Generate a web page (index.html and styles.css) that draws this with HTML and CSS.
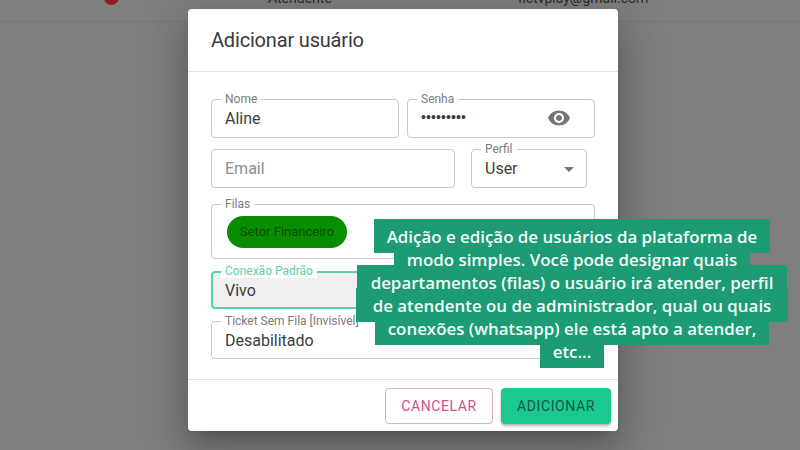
FILE: index.html
```html
<!DOCTYPE html>
<html>
<head>
    <title>Adicionar usuário</title>
    <link rel="stylesheet" href="styles.css">
</head>
<body>

    <div class="behind-row">
        <span class="status-dot"></span>
        <span class="behind-profile">Atendente</span>
        <span class="behind-email">fictvplay@gmail.com</span>
    </div>

    <div class="dialog">
        <h2 class="dialog-title">Adicionar usuário</h2>

        <div class="dialog-body">
            <div class="form-row">
                <div class="field grow">
                    <span class="field-label">Nome</span>
                    <span class="field-value">Aline</span>
                </div>
                <div class="field grow password">
                    <span class="field-label">Senha</span>
                    <span class="field-value dots">•••••••••</span>
                    <svg class="eye" viewBox="0 0 24 24" width="24" height="24"><path d="M12 4.5C7 4.5 2.73 7.61 1 12c1.73 4.39 6 7.5 11 7.5s9.27-3.11 11-7.5c-1.73-4.39-6-7.5-11-7.5zM12 17c-2.76 0-5-2.24-5-5s2.24-5 5-5 5 2.24 5 5-2.24 5-5 5zm0-8c-1.66 0-3 1.34-3 3s1.34 3 3 3 3-1.34 3-3-1.34-3-3-3z"/></svg>
                </div>
            </div>

            <div class="form-row email-row">
                <div class="field email">
                    <span class="field-value placeholder">Email</span>
                </div>
                <div class="field perfil">
                    <span class="field-label">Perfil</span>
                    <span class="field-value">User</span>
                    <span class="arrow"></span>
                </div>
            </div>

            <div class="field filas">
                <span class="field-label">Filas</span>
                <span class="chip">Setor Financeiro</span>
            </div>

            <div class="field focused">
                <span class="field-label">Conexão Padrão</span>
                <span class="field-value">Vivo</span>
            </div>

            <div class="field ticket">
                <span class="field-label">Ticket Sem Fila [Invisível]</span>
                <span class="field-value">Desabilitado</span>
            </div>
        </div>

        <div class="dialog-actions">
            <button class="btn-cancel">CANCELAR</button>
            <button class="btn-add">ADICIONAR</button>
        </div>
    </div>

    <div class="caption">
        <div class="caption-line">Adição e edição de usuários da plataforma de</div>
        <div class="caption-line">modo simples. Você pode designar quais</div>
        <div class="caption-line third">departamentos (filas) o usuário irá atender, perfil</div>
        <div class="caption-line wide">de atendente ou de administrador, qual ou quais</div>
        <div class="caption-line">conexões (whatsapp) ele está apto a atender,</div>
        <div class="caption-line">etc...</div>
    </div>

</body>
</html>
```

FILE: styles.css
```css
body {
    background-color: #7f7f7f;
    color: #3c3c3c;
    font-family: Roboto, Arial, sans-serif;
    margin: 0;
    height: 450px;
    overflow: hidden;
    position: relative;
    display: flex;
    justify-content: center;
    align-items: flex-start;
}

.behind-row {
    position: absolute;
    top: 0;
    left: 0;
    right: 0;
    height: 21px;
    border-bottom: 1px solid #767676;
    font-size: 14px;
    color: #2b2b2b;
}

.status-dot {
    position: absolute;
    left: 104px;
    top: -10px;
    width: 15px;
    height: 15px;
    border-radius: 50%;
    background-color: #8c1f1a;
}

.behind-profile {
    position: absolute;
    left: 268px;
    top: -10px;
}

.behind-email {
    position: absolute;
    left: 518px;
    top: -10px;
}

.dialog {
    position: relative;
    width: 430px;
    height: 422px;
    margin-top: 9px;
    margin-left: 6px;
    background-color: #fff;
    border-radius: 4px;
    box-shadow: 0 11px 15px -7px rgba(0,0,0,0.2), 0 24px 38px 3px rgba(0,0,0,0.14), 0 9px 46px 8px rgba(0,0,0,0.12);
    display: flex;
    flex-direction: column;
}

.dialog-title {
    margin: 0;
    height: 63px;
    box-sizing: border-box;
    padding: 19px 23px 0;
    font-size: 20px;
    font-weight: 400;
    line-height: 24px;
    letter-spacing: -0.18px;
    color: #3a3a3a;
    border-bottom: 1px solid #e3e3e3;
}

.dialog-body {
    flex: 1;
    padding: 27px 23px 0;
    display: flex;
    flex-direction: column;
    gap: 11px;
    border-bottom: 1px solid #e3e3e3;
}

.form-row {
    display: flex;
    gap: 8px;
}

.email-row {
    gap: 16px;
    margin-right: 8px;
}

.grow {
    flex: 1;
}

.field {
    position: relative;
    box-sizing: border-box;
    height: 39px;
    border: 1px solid #c9c9c9;
    border-radius: 4px;
    display: flex;
    align-items: center;
    padding: 0 13px;
    font-size: 16px;
    background-color: #fff;
}

.field-label {
    position: absolute;
    top: -8px;
    left: 9px;
    padding: 0 4px;
    background-color: #fff;
    font-size: 12px;
    line-height: 14px;
    color: #7b7b7b;
}

.field-value {
    color: #3c3c3c;
}

.placeholder {
    color: #8d8d8d;
}

.dots {
    font-family: "Liberation Sans", Arial, sans-serif;
    font-size: 14px;
    letter-spacing: 0.1px;
    margin-top: -3px;
}

.eye {
    position: absolute;
    left: 139px;
    top: 6px;
    fill: #757575;
}

.email {
    flex: 1;
}

.perfil {
    width: 116px;
}

.arrow {
    position: absolute;
    right: 12px;
    top: 17px;
    border-left: 5px solid transparent;
    border-right: 5px solid transparent;
    border-top: 5px solid #757575;
}

.filas {
    height: 55px;
    margin-top: 5px;
    padding: 0 15px;
    align-items: flex-start;
}

.chip {
    margin-top: 11px;
    width: 120px;
    height: 32px;
    border-radius: 16px;
    background-color: #088c00;
    color: #054d02;
    font-size: 13px;
    line-height: 32px;
    text-align: center;
}

.focused {
    border: 2px solid #5bd0ac;
    background-color: #f0f0f0;
    padding-left: 12px;
    height: 38px;
    margin-top: 1px;
}

.focused .field-label {
    color: #5bd0ac;
    left: 8px;
    top: -9px;
}

.ticket {
    height: 38px;
    margin-top: 1px;
}

.dialog-actions {
    height: 51px;
    box-sizing: border-box;
    padding: 8px 7px 0 0;
    display: flex;
    justify-content: flex-end;
    gap: 8px;
}

.dialog-actions button {
    height: 36px;
    box-sizing: border-box;
    border-radius: 4px;
    font-family: Roboto, Arial, sans-serif;
    font-size: 14px;
    letter-spacing: 0.6px;
}

.btn-cancel {
    width: 108px;
    background-color: #fff;
    border: 1px solid #e6a9c4;
    color: #d0508c;
}

.btn-add {
    width: 110px;
    background-color: #1bc88f;
    border: none;
    color: #0c5a44;
    box-shadow: 0 2px 3px rgba(0,0,0,0.3);
}

.caption {
    position: absolute;
    left: 300px;
    top: 219px;
    width: 544px;
    text-align: center;
    font-family: "Open Sans", sans-serif;
    font-size: 16.9px;
    font-weight: 600;
    line-height: 23px;
    color: #f2fbf8;
}

/* block backgrounds paint under all the text, so lines can overlap */
.caption-line {
    width: fit-content;
    margin: -11px auto 0;
    padding: 5.5px 13px;
    background-color: #1d9b74;
}

.caption-line:first-child {
    margin-top: 0;
}

.caption-line.third {
    padding-left: 14px;
    padding-right: 14px;
}

.caption-line.wide {
    padding-left: 17px;
    padding-right: 17px;
}
```
